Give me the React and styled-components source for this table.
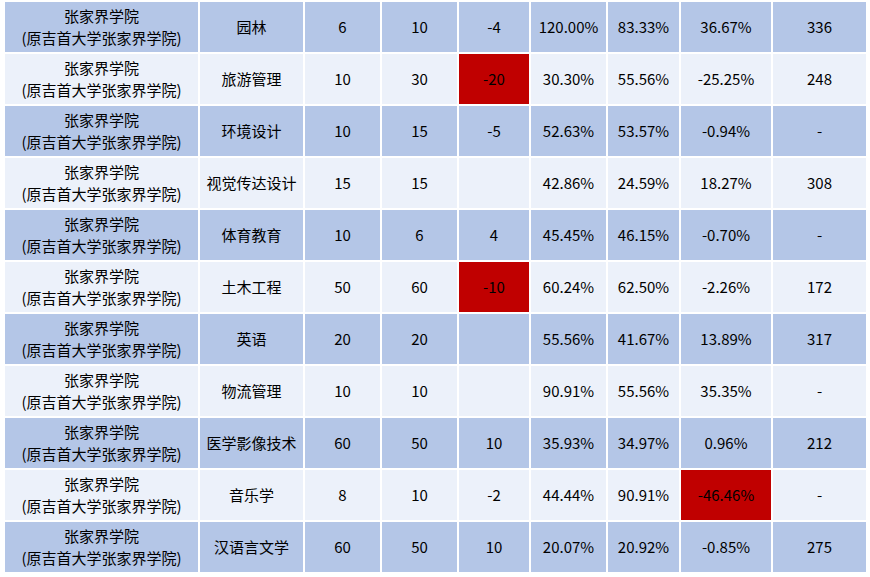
import React from "react"
import styled, { createGlobalStyle } from "styled-components"

const GlobalStyle = createGlobalStyle`
  html, body {
    margin: 0;
    padding: 0;
    background: #ffffff;
  }
  body {
    font-family: "Noto Sans CJK SC", "Microsoft YaHei", sans-serif;
  }
`

const school = ["张家界学院", "(原吉首大学张家界学院)"]

const rows = [
  { major: "园林", a: "6", b: "10", diff: "-4", p1: "120.00%", p2: "83.33%", p3: "36.67%", last: "336" },
  { major: "旅游管理", a: "10", b: "30", diff: "-20", p1: "30.30%", p2: "55.56%", p3: "-25.25%", last: "248", redDiff: true },
  { major: "环境设计", a: "10", b: "15", diff: "-5", p1: "52.63%", p2: "53.57%", p3: "-0.94%", last: "-" },
  { major: "视觉传达设计", a: "15", b: "15", diff: "", p1: "42.86%", p2: "24.59%", p3: "18.27%", last: "308" },
  { major: "体育教育", a: "10", b: "6", diff: "4", p1: "45.45%", p2: "46.15%", p3: "-0.70%", last: "-" },
  { major: "土木工程", a: "50", b: "60", diff: "-10", p1: "60.24%", p2: "62.50%", p3: "-2.26%", last: "172", redDiff: true },
  { major: "英语", a: "20", b: "20", diff: "", p1: "55.56%", p2: "41.67%", p3: "13.89%", last: "317" },
  { major: "物流管理", a: "10", b: "10", diff: "", p1: "90.91%", p2: "55.56%", p3: "35.35%", last: "-" },
  { major: "医学影像技术", a: "60", b: "50", diff: "10", p1: "35.93%", p2: "34.97%", p3: "0.96%", last: "212" },
  { major: "音乐学", a: "8", b: "10", diff: "-2", p1: "44.44%", p2: "90.91%", p3: "-46.46%", last: "-", redP3: true },
  { major: "汉语言文学", a: "60", b: "50", diff: "10", p1: "20.07%", p2: "20.92%", p3: "-0.85%", last: "275" },
]

const widths = [193, 103, 75, 75, 70, 75, 71, 90, 93]

const Sheet = styled.table`
  margin-left: 3px;
  border-collapse: separate;
  border-spacing: 2px;
  table-layout: fixed;
  background: #ffffff;
`

const Row = styled.tr`
  background: ${(p) => (p.$dark ? "#b4c6e7" : "#ecf1fa")};
`

const Cell = styled.td`
  height: 50px;
  padding: 0;
  text-align: center;
  vertical-align: middle;
  font-size: 15px;
  line-height: 22px;
  color: #000000;
  white-space: nowrap;
  background: ${(p) => (p.$alert ? "#c00000" : "inherit")};
`

export default function App() {
  return (
    <>
      <GlobalStyle />
      <Sheet>
        <colgroup>
          {widths.map((w, i) => (
            <col key={i} style={{ width: w }} />
          ))}
        </colgroup>
        <tbody>
          {rows.map((r, i) => (
            <Row key={i} $dark={i % 2 === 0}>
              <Cell>
                {school[0]}
                <br />
                {school[1]}
              </Cell>
              <Cell>{r.major}</Cell>
              <Cell>{r.a}</Cell>
              <Cell>{r.b}</Cell>
              <Cell $alert={r.redDiff}>{r.diff}</Cell>
              <Cell>{r.p1}</Cell>
              <Cell>{r.p2}</Cell>
              <Cell $alert={r.redP3}>{r.p3}</Cell>
              <Cell>{r.last}</Cell>
            </Row>
          ))}
        </tbody>
      </Sheet>
    </>
  )
}
